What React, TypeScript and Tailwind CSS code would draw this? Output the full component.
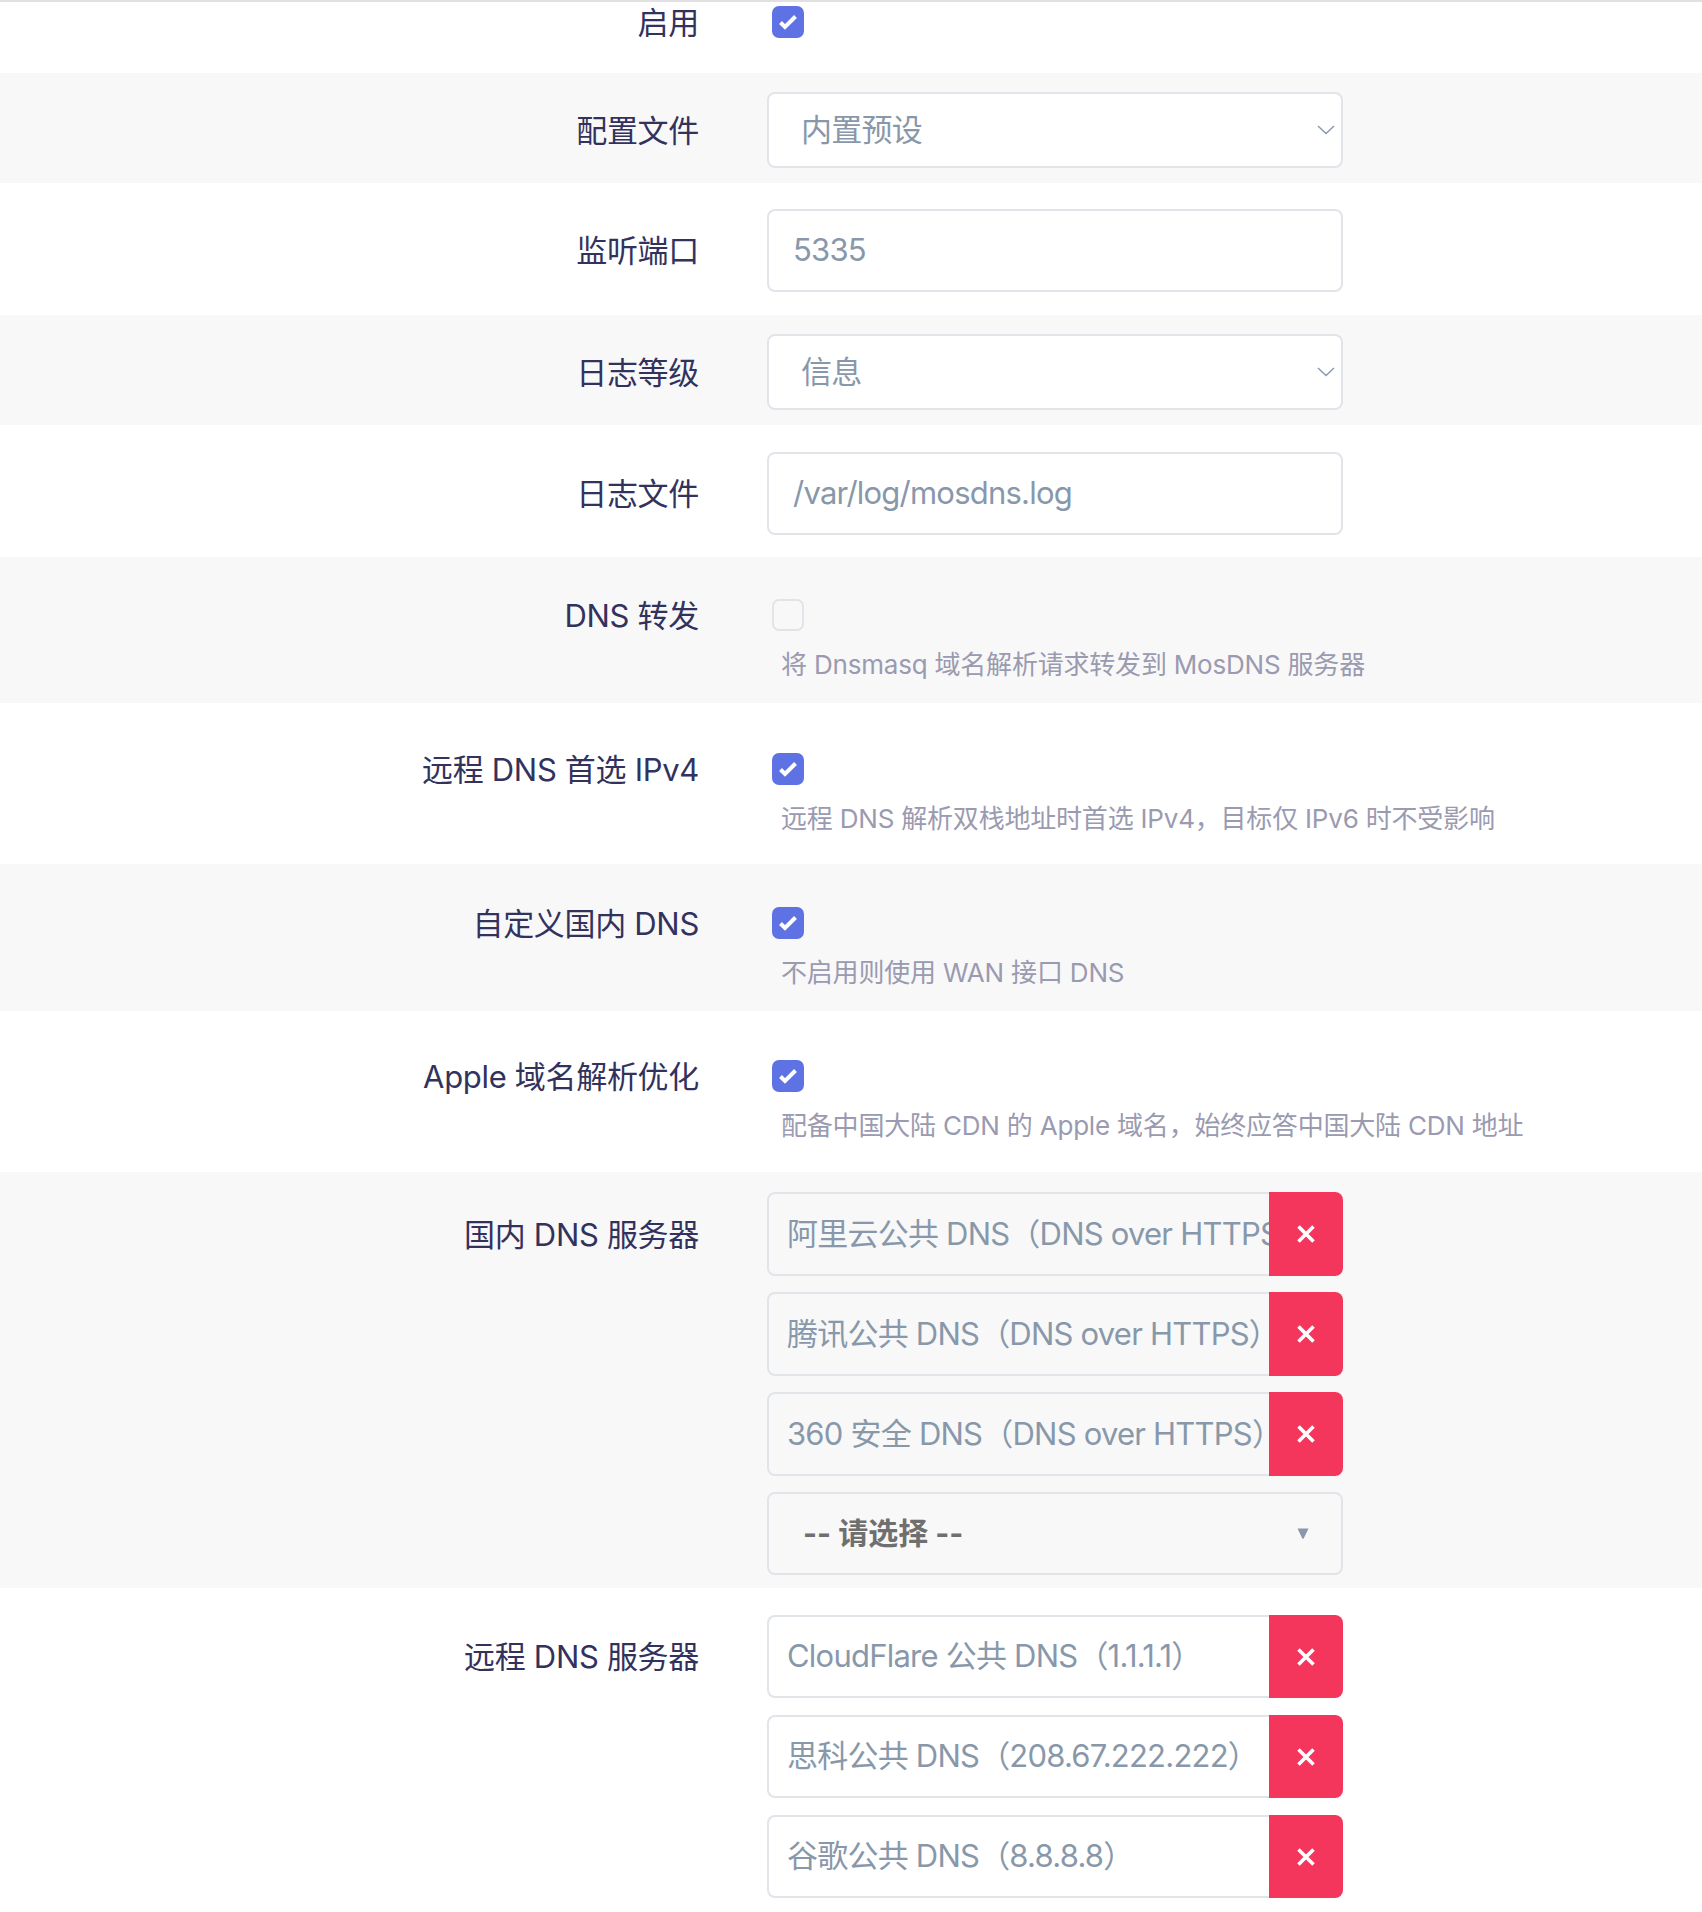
import type { ReactNode } from "react";
import clsx from "clsx";

type RowProps = {
  label: string;
  labelH: string;
  gray?: boolean;
  className: string;
  children: ReactNode;
};

const Row = ({ label, labelH, gray, className, children }: RowProps) => (
  <div className={clsx("flex", gray ? "bg-[#f8f8f8]" : "bg-white", className)}>
    <div
      className={clsx(
        "w-[699px] shrink-0 flex items-center justify-end text-[31px] leading-none tracking-[-0.01em] text-[#32325d] whitespace-nowrap",
        labelH
      )}
    >
      {label}
    </div>
    <div className="ml-[68px] flex flex-col">{children}</div>
  </div>
);

const Checkbox = ({ checked }: { checked?: boolean }) =>
  checked ? (
    <span className="ml-[5px] flex h-8 w-8 items-center justify-center rounded-[7px] bg-[#5e72e4]">
      <svg width="32" height="32" viewBox="0 0 32 32">
        <path d="M8.5 16.5l4.5 4.5 10.5-10.5" fill="none" stroke="#fff" strokeWidth="4" />
      </svg>
    </span>
  ) : (
    <span className="ml-[5px] block h-8 w-8 rounded-[7px] border-2 border-[#e1e4e9]" />
  );

const Help = ({ children }: { children: ReactNode }) => (
  <p className="ml-[14px] mt-[15px] h-9 flex items-center text-[26px] tracking-[-0.2px] text-[#9a9ab0] whitespace-nowrap">
    {children}
  </p>
);

const Select = ({ value }: { value: string }) => (
  <div className="flex h-[76px] w-[576px] items-center justify-between rounded-[8px] border-2 border-[#e1e4e9] bg-white pl-[32px] pr-[6px] text-[31px] tracking-[-0.025em] text-[#8898aa]">
    <span>{value}</span>
    <svg width="18" height="10" viewBox="0 0 18 10">
      <polyline points="1,1 9,8.5 17,1" fill="none" stroke="#8898aa" strokeWidth="1.4" />
    </svg>
  </div>
);

const TextInput = ({ value }: { value: string }) => (
  <div className="flex h-[83px] w-[576px] items-center rounded-[8px] border-2 border-[#e1e4e9] bg-white pl-[24px] text-[31px] tracking-[-0.025em] text-[#8898aa]">
    {value}
  </div>
);

const ListItem = ({ value, h }: { value: string; h: string }) => (
  <div className={clsx("flex w-[576px]", h)}>
    <div className="flex min-w-0 flex-1 items-center overflow-hidden whitespace-nowrap rounded-l-[8px] border-2 border-r-0 border-[#e1e4e9] pl-[18px] text-[31px] tracking-[-0.025em] text-[#8898aa]">
      {value}
    </div>
    <button className="flex w-[74px] shrink-0 items-center justify-center rounded-r-[8px] bg-[#f5365c]">
      <svg width="20" height="20" viewBox="0 0 20 20">
        <path d="M2.5 2.5l15 15M17.5 2.5l-15 15" stroke="#fff" strokeWidth="3.6" />
      </svg>
    </button>
  </div>
);

export default function App() {
  return (
    <div className="min-h-[1912px] w-[1702px] bg-white font-['Inter','Noto_Sans_CJK_SC',sans-serif]">
      <div className="border-t-2 border-[#e1e1e1]">
        <Row label="启用" labelH="h-8" className="pt-[4px] pb-[35px]">
          <Checkbox checked />
        </Row>
      </div>

      <Row label="配置文件" labelH="h-[76px]" gray className="pt-[19px] pb-[15px]">
        <Select value="内置预设" />
      </Row>

      <Row label="监听端口" labelH="h-[83px]" className="pt-[26px] pb-[23px]">
        <TextInput value="5335" />
      </Row>

      <Row label="日志等级" labelH="h-[76px]" gray className="pt-[19px] pb-[15px]">
        <Select value="信息" />
      </Row>

      <Row label="日志文件" labelH="h-[83px]" className="pt-[27px] pb-[22px]">
        <TextInput value="/var/log/mosdns.log" />
      </Row>

      <Row label="DNS 转发" labelH="h-8" gray className="pt-[42px] pb-[21px]">
        <Checkbox />
        <Help>将 Dnsmasq 域名解析请求转发到 MosDNS 服务器</Help>
      </Row>

      <Row label="远程 DNS 首选 IPv4" labelH="h-8" className="pt-[50px] pb-[28px]">
        <Checkbox checked />
        <Help>远程 DNS 解析双栈地址时首选 IPv4，目标仅 IPv6 时不受影响</Help>
      </Row>

      <Row label="自定义国内 DNS" labelH="h-8" gray className="pt-[43px] pb-[21px]">
        <Checkbox checked />
        <Help>不启用则使用 WAN 接口 DNS</Help>
      </Row>

      <Row label="Apple 域名解析优化" labelH="h-8" className="pt-[49px] pb-[29px]">
        <Checkbox checked />
        <Help>配备中国大陆 CDN 的 Apple 域名，始终应答中国大陆 CDN 地址</Help>
      </Row>

      <Row label="国内 DNS 服务器" labelH="h-[84px]" gray className="pt-[20px] pb-[13px]">
        <div className="flex flex-col gap-4">
          <ListItem h="h-[84px]" value="阿里云公共 DNS（DNS over HTTPS）" />
          <ListItem h="h-[84px]" value="腾讯公共 DNS（DNS over HTTPS）" />
          <ListItem h="h-[84px]" value="360 安全 DNS（DNS over HTTPS）" />
          <div className="flex h-[83px] w-[576px] items-center justify-between rounded-[8px] border-2 border-[#e1e4e9] pl-[34px] pr-[32px] text-[30px] font-bold text-[#6f6f6f]">
            <span>-- 请选择 --</span>
            <svg width="12" height="11" viewBox="0 0 12 11">
              <path d="M0.5 0.5h11L6.8 10.2a1 1 0 0 1-1.6 0z" fill="#8898aa" />
            </svg>
          </div>
        </div>
      </Row>

      <Row label="远程 DNS 服务器" labelH="h-[83px]" className="pt-[27px] pb-[20px]">
        <div className="flex flex-col gap-[17px]">
          <ListItem h="h-[83px]" value="CloudFlare 公共 DNS（1.1.1.1）" />
          <ListItem h="h-[83px]" value="思科公共 DNS（208.67.222.222）" />
          <ListItem h="h-[83px]" value="谷歌公共 DNS（8.8.8.8）" />
        </div>
      </Row>
    </div>
  );
}
